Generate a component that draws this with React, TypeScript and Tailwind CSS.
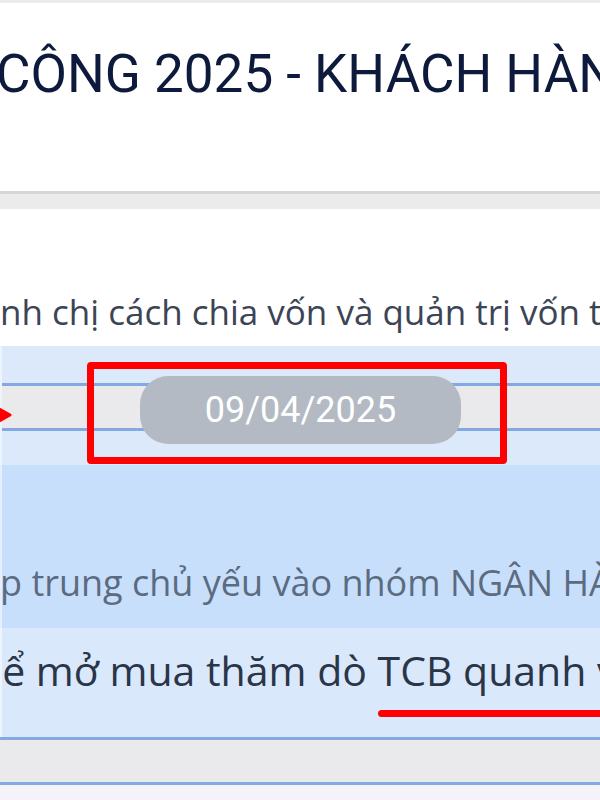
const bodyFont = "font-['Open_Sans',sans-serif]";

const BlueLine = () => <div className="h-[3px] bg-[#84a8e2]" />;

export default function App() {
  return (
    <div className="relative h-[800px] w-[600px] overflow-hidden bg-white">
      <div className="h-[3px] bg-[#ececec]" />
      <header className="h-[188px] overflow-hidden whitespace-nowrap pt-[45px] font-['Roboto',sans-serif] text-[53px] font-normal leading-none text-[#0e1a3b]">
        <div className="-ml-[4px]">CÔNG 2025 - KHÁCH HÀNG</div>
      </header>
      <div className="h-[3px] bg-[#d6d6d6]" />
      <div className="h-[15px] bg-[#ebebeb]" />

      <section
        className={`h-[137px] overflow-hidden whitespace-nowrap pt-[85px] ${bodyFont} text-[35px] leading-none text-[#3b4556]`}
      >
        nh chị cách chia vốn và quản trị vốn theo
      </section>

      {/* date separator */}
      <section className="relative h-[119px] border-l-2 border-l-[#ecf4ff] bg-[#dce9fb]">
        <div className="h-[37px]" />
        <BlueLine />
        <div className="h-[42px] bg-[#eaeaec]" />
        <BlueLine />
        <div className="absolute left-[138px] top-[30px] flex h-[68px] w-[321px] items-center justify-center rounded-[28px] bg-[#b3bac4] font-['Roboto',sans-serif] text-[36px] text-white">
          09/04/2025
        </div>
      </section>

      <section
        className={`h-[163px] overflow-hidden whitespace-nowrap border-l-2 border-l-[#e4f0ff] bg-[#c8dffc] pt-[100px] ${bodyFont} text-[36px] leading-none text-[#5b6b80]`}
      >
        <div className="-ml-[2px]">p trung chủ yếu vào nhóm NGÂN HÀNG</div>
      </section>

      <section
        className={`h-[109px] overflow-hidden whitespace-nowrap border-l-2 border-l-[#ecf4ff] bg-[#dae8fc] pt-[22px] ${bodyFont} text-[41px] leading-none text-[#2a3548]`}
      >
        <div className="-ml-[25px]">hể mở mua thăm dò TCB quanh vùng</div>
      </section>

      <BlueLine />
      <div className="h-[42px] bg-[#eaeaec]" />
      <BlueLine />
      <div className="h-[20px] bg-[#f4f3f9]" />

      {/* annotations */}
      <div className="absolute left-[87px] top-[362px] h-[102px] w-[420px] rounded-[4px] border-[7px] border-[#ff0000]" />
      <div className="absolute left-[378px] top-[710px] h-[7px] w-[240px] rounded-full bg-[#ff0000]" />
      <svg className="absolute left-0 top-[404px]" width="12" height="22" viewBox="0 0 12 22">
        <path d="M-6 2 L10 11 L-6 20 Z" fill="#ff0000" stroke="#ff0000" strokeWidth="3" strokeLinejoin="round" />
      </svg>
    </div>
  );
}
